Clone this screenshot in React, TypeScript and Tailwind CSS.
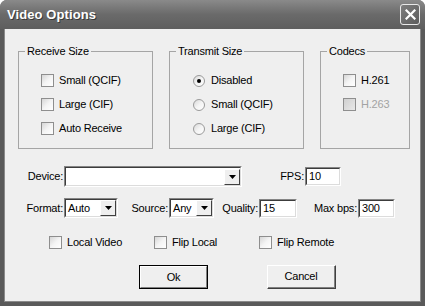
import React from "react";

const font = { fontFamily: '"Liberation Sans", Arial, sans-serif' };

function Check({ label, disabled }: { label: string; disabled?: boolean }) {
  return (
    <div className="flex items-center h-[13px]">
      <span
        className={`w-[13px] h-[13px] shrink-0 border border-[#8e8e8e] bg-gradient-to-br ${
          disabled ? "from-[#d0d0d0] to-[#e8e8e8]" : "from-[#d6d6d6] via-[#f4f4f4] to-white"
        }`}
      />
      <span className={`ml-[5px] text-[11px] leading-[13px] tracking-[-0.2px] whitespace-nowrap ${disabled ? "text-[#a3a3a3]" : "text-black"}`}>
        {label}
      </span>
    </div>
  );
}

function Radio({ label, checked }: { label: string; checked?: boolean }) {
  return (
    <div className="flex items-center h-[13px]">
      <span className="w-[12px] h-[12px] shrink-0 rounded-full border border-[#9a9a9a] bg-gradient-to-br from-[#d8d8d8] via-[#f4f4f4] to-white flex items-center justify-center">
        {checked && <span className="w-[4px] h-[4px] rounded-full bg-black" />}
      </span>
      <span className="ml-[6px] text-[11px] leading-[13px] tracking-[-0.2px] whitespace-nowrap">{label}</span>
    </div>
  );
}

function Group({ title, width, children }: { title: string; width: string; children: React.ReactNode }) {
  return (
    <fieldset className={`${width} h-[104px] border border-[#a5a5a5] shrink-0`}>
      <legend className="ml-[6px] px-[2px] text-[11px] leading-[13px] tracking-[-0.2px]">{title}</legend>
      {children}
    </fieldset>
  );
}

function Sunken({ className, children }: { className: string; children?: React.ReactNode }) {
  return (
    <div className={`${className} border-t border-l border-[#858585] border-b-[#ffffff] border-r-[#ffffff] border-b border-r`}>
      <div className="w-full h-full border-t border-l border-[#3c3c3c] border-b border-r border-b-[#dcdcdc] border-r-[#dcdcdc] bg-white flex items-center">
        {children}
      </div>
    </div>
  );
}

function Arrow() {
  return (
    <div className="ml-auto w-[16px] h-[16px] mr-0 bg-[#efefef] border-t border-l border-white border-b border-r border-b-[#404040] border-r-[#404040] flex items-center justify-center">
      <svg width="7" height="4" viewBox="0 0 7 4">
        <path d="M0 0h7L3.5 4z" fill="#000" />
      </svg>
    </div>
  );
}

function Combo({ className, value }: { className: string; value?: string }) {
  return (
    <Sunken className={className}>
      <span className="pl-[2px] text-[11px] tracking-[-0.2px]">{value}</span>
      <Arrow />
    </Sunken>
  );
}

function Edit({ className, value }: { className: string; value: string }) {
  return (
    <Sunken className={className}>
      <span className="pl-[2px] text-[11px] tracking-[-0.2px]">{value}</span>
    </Sunken>
  );
}

function Label({ className, children }: { className: string; children: React.ReactNode }) {
  return <span className={`${className} shrink-0 text-right text-[11px] tracking-[-0.2px] whitespace-nowrap pr-[1px]`}>{children}</span>;
}

export default function App() {
  return (
    <div style={font} className="w-[425px] h-[306px] flex flex-col bg-[#5a5a5a] rounded-t-[7px] overflow-hidden text-black">
      <div className="h-[29px] shrink-0 flex items-center justify-between pl-[7px] pr-[5px] bg-gradient-to-b from-[#8a8a8a] via-[#6a6a6a] to-[#5e5e5e]">
        <span className="text-white font-bold text-[13px] tracking-[0.1px] [text-shadow:1px_1px_0_#3a3a3a]">Video Options</span>
        <div className="w-[20px] h-[21px] rounded-[3px] border border-[#e8e8e8] bg-gradient-to-br from-[#7e7e7e] to-[#5c5c5c] flex items-center justify-center">
          <svg width="11" height="11" viewBox="0 0 11 11">
            <path d="M1.5 1.5l8 8M9.5 1.5l-8 8" stroke="#fff" strokeWidth="2.2" strokeLinecap="square" />
          </svg>
        </div>
      </div>

      <div className="flex-1 mx-[4px] mb-[4px] bg-[#efefef] border-l border-r border-b border-[#8a8a8a] flex flex-col">
        <div className="flex gap-[16px] pl-[13px] pt-[16px]">
          <Group title="Receive Size" width="w-[135px]">
            <div className="flex flex-col gap-[11px] pl-[22px] pt-[16px]">
              <Check label="Small (QCIF)" />
              <Check label="Large (CIF)" />
              <Check label="Auto Receive" />
            </div>
          </Group>
          <Group title="Transmit Size" width="w-[135px]">
            <div className="flex flex-col gap-[11px] pl-[23px] pt-[16px]">
              <Radio label="Disabled" checked />
              <Radio label="Small (QCIF)" />
              <Radio label="Large (CIF)" />
            </div>
          </Group>
          <Group title="Codecs" width="w-[90px]">
            <div className="flex flex-col gap-[11px] pl-[22px] pt-[16px]">
              <Check label="H.261" />
              <Check label="H.263" disabled />
            </div>
          </Group>
        </div>

        <div className="flex items-center mt-[17px] h-[21px]">
          <Label className="w-[59px]">Device:</Label>
          <Combo className="w-[178px] h-[21px]" />
          <Label className="w-[63px]">FPS:</Label>
          <Edit className="w-[36px] h-[19px]" value="10" />
        </div>

        <div className="flex items-center mt-[11px] h-[20px]">
          <Label className="w-[59px]">Format:</Label>
          <Combo className="w-[54px] h-[20px]" value="Auto" />
          <Label className="w-[51px]">Source:</Label>
          <Combo className="w-[45px] h-[20px]" value="Any" />
          <Label className="w-[45px]">Quality:</Label>
          <Edit className="w-[38px] h-[19px]" value="15" />
          <Label className="w-[61px]">Max bps:</Label>
          <Edit className="w-[37px] h-[19px]" value="300" />
        </div>

        <div className="flex mt-[18px] pl-[44px]">
          <div className="w-[105px]"><Check label="Local Video" /></div>
          <div className="w-[105px]"><Check label="Flip Local" /></div>
          <div className="w-[105px]"><Check label="Flip Remote" /></div>
        </div>

        <div className="flex mt-[16px] pl-[134px] gap-[59px]">
          <div className="w-[69px] h-[24px] border border-black">
            <div className="w-full h-full bg-[#efefef] border-t border-l border-white border-b border-r border-b-[#808080] border-r-[#808080] flex items-center justify-center text-[11px] tracking-[-0.2px]">
              Ok
            </div>
          </div>
          <div className="w-[69px] h-[24px] border-t border-l border-white border-b border-r border-b-[#404040] border-r-[#404040]">
            <div className="w-full h-full bg-[#efefef] border-b border-r border-[#808080] flex items-center justify-center text-[11px] tracking-[-0.2px]">
              Cancel
            </div>
          </div>
        </div>
      </div>
    </div>
  );
}
